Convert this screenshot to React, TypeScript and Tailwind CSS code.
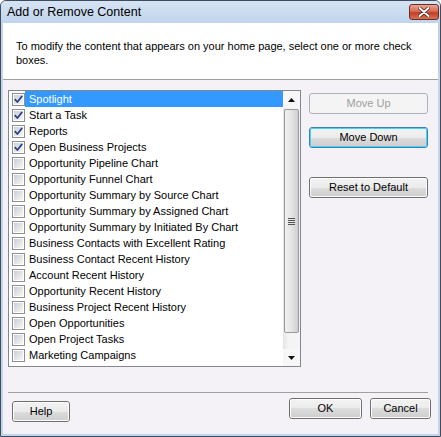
import type { ReactNode } from "react";

const items: { label: string; checked: boolean }[] = [
  { label: "Spotlight", checked: true },
  { label: "Start a Task", checked: true },
  { label: "Reports", checked: true },
  { label: "Open Business Projects", checked: true },
  { label: "Opportunity Pipeline Chart", checked: false },
  { label: "Opportunity Funnel Chart", checked: false },
  { label: "Opportunity Summary by Source Chart", checked: false },
  { label: "Opportunity Summary by Assigned Chart", checked: false },
  { label: "Opportunity Summary by Initiated By Chart", checked: false },
  { label: "Business Contacts with Excellent Rating", checked: false },
  { label: "Business Contact Recent History", checked: false },
  { label: "Account Recent History", checked: false },
  { label: "Opportunity Recent History", checked: false },
  { label: "Business Project Recent History", checked: false },
  { label: "Open Opportunities", checked: false },
  { label: "Open Project Tasks", checked: false },
  { label: "Marketing Campaigns", checked: false },
];

// Vista-style check box, 13x13
function CheckBox({ checked }: { checked: boolean }) {
  return (
    <div className="flex h-[13px] w-[13px] shrink-0 items-center justify-center border border-[#8e8f8f] bg-white p-px">
      <div className="relative h-full w-full bg-gradient-to-br from-[#cbcfd5] to-[#f6f6f6]">
        {checked && (
          <svg viewBox="0 0 9 9" className="absolute inset-0 h-[9px] w-[9px]">
            <path
              d="M1.2 4.6 L3.4 7 L7.8 1.4"
              fill="none"
              stroke="#2c3f86"
              strokeWidth="1.7"
              strokeLinecap="round"
              strokeLinejoin="round"
            />
          </svg>
        )}
      </div>
    </div>
  );
}

function Button({
  children,
  disabled,
  focused,
  className = "",
}: {
  children: ReactNode;
  disabled?: boolean;
  focused?: boolean;
  className?: string;
}) {
  if (disabled) {
    return (
      <div
        className={`flex h-[21px] items-center justify-center rounded-[3px] border border-[#adb2b5] bg-[#f4f4f4] text-[#a0a0a0] ${className}`}
      >
        {children}
      </div>
    );
  }
  return (
    <div
      className={`rounded-[3px] border ${
        focused ? "border-[#3c7fb1]" : "border-[#707070]"
      } h-[21px] ${className}`}
    >
      <div
        className={`flex h-full w-full items-center justify-center rounded-[2px] border ${
          focused ? "border-[#48d2f9]" : "border-[#fbfbfb]"
        } bg-[linear-gradient(#f2f2f2_0%,#ebebeb_50%,#dddddd_50%,#cfcfcf_100%)] text-black`}
      >
        {children}
      </div>
    </div>
  );
}

function ScrollBar() {
  return (
    <div className="flex w-[17px] shrink-0 flex-col bg-[linear-gradient(90deg,#e4e4e4,#f4f4f4_30%,#f4f4f4)]">
      <div className="flex h-[17px] items-center justify-center bg-[#f7f7f7]">
        <svg width="7" height="4" viewBox="0 0 7 4">
          <path d="M0 4 L3.5 0 L7 4 Z" fill="#111" />
        </svg>
      </div>
      <div className="mx-px mt-[1px] flex h-[224px] items-center justify-center rounded-[2px] border border-[#9a9a9a] bg-[linear-gradient(90deg,#f1f1f1,#e2e2e2_55%,#cfcfcf)]">
        <div className="flex flex-col gap-px">
          <div className="h-px w-[7px] bg-[#555]" />
          <div className="h-px w-[7px] bg-[#555]" />
          <div className="h-px w-[7px] bg-[#555]" />
          <div className="h-px w-[7px] bg-[#555]" />
        </div>
      </div>
      <div className="flex-1" />
      <div className="flex h-[17px] items-center justify-center bg-[#f7f7f7]">
        <svg width="7" height="4" viewBox="0 0 7 4">
          <path d="M0 0 L7 0 L3.5 4 Z" fill="#111" />
        </svg>
      </div>
    </div>
  );
}

export default function App() {
  return (
    <div className="flex h-[437px] w-[441px] flex-col rounded-t-[6px] border border-[#3f4c5d] bg-[#c2d5eb] font-['Liberation_Sans',Arial,sans-serif] text-[11px] text-black">
      {/* Title bar */}
      <div className="flex h-[22px] shrink-0 items-center justify-between rounded-t-[5px] bg-[linear-gradient(#d6e4f4,#c0d4ec)] pl-[6px] pr-[1px]">
        <span className="text-[12.5px] text-black">Add or Remove Content</span>
        <div className="flex h-[16px] w-[30px] items-center justify-center rounded-[3px] border border-[#6f2d22] bg-[linear-gradient(#eaa593,#d86b56_45%,#c23e25_55%,#d5735a)]">
          <svg width="12" height="10" viewBox="0 0 12 10">
            <path
              d="M1.5 1 L10.5 9 M10.5 1 L1.5 9"
              stroke="#4a1a12"
              strokeWidth="3.4"
              strokeLinecap="round"
            />
            <path
              d="M1.5 1 L10.5 9 M10.5 1 L1.5 9"
              stroke="#ffffff"
              strokeWidth="2"
              strokeLinecap="round"
            />
          </svg>
        </div>
      </div>

      {/* Client area */}
      <div className="mx-[2px] mb-[2px] flex flex-1 flex-col">
        <div className="h-[56px] shrink-0 bg-white pl-[13px] pt-[16px] leading-[14px]">
          <p className="whitespace-nowrap">
            To modify the content that appears on your home page, select one or more check
          </p>
          <p className="whitespace-nowrap">boxes.</p>
        </div>
        <div className="h-px shrink-0 bg-[#a0a0a0]" />

        <div className="flex flex-1 flex-col bg-[#f4f2f6]">
          <div className="flex pl-[5px] pt-[10px]">
            {/* List box */}
            <div className="flex h-[277px] w-[293px] border border-[#828790] bg-white">
              <div className="flex flex-1 flex-col">
                {items.map((item, i) => (
                  <div key={item.label} className="flex h-[16px] items-center pl-[3px]">
                    <CheckBox checked={item.checked} />
                    <div
                      className={`flex h-[16px] flex-1 items-center whitespace-nowrap pl-[4px] ${
                        i === 0 ? "bg-[#3399ff] text-white" : ""
                      }`}
                    >
                      {item.label}
                    </div>
                  </div>
                ))}
              </div>
              <ScrollBar />
            </div>

            {/* Side buttons */}
            <div className="ml-[8px] flex w-[119px] flex-col pt-[3px]">
              <Button disabled>Move Up</Button>
              <Button focused className="mt-[13px]">
                Move Down
              </Button>
              <Button className="mt-[29px]">Reset to Default</Button>
            </div>
          </div>

          <div className="ml-[5px] mt-[25px] h-px w-[420px] bg-[#a0a0a0]" />

          <div className="flex items-start pt-[5px]">
            <Button className="ml-[9px] mt-[3px] w-[58px]">Help</Button>
            <div className="flex-1" />
            <Button className="w-[73px]">OK</Button>
            <Button className="ml-[8px] mr-[7px] w-[61px]">Cancel</Button>
          </div>
        </div>
      </div>
    </div>
  );
}
